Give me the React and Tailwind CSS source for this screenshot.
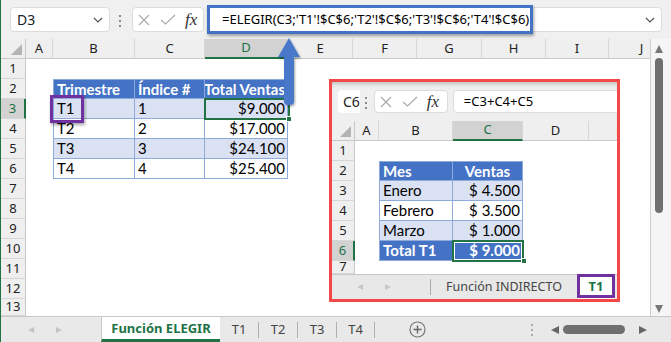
import React from "react";

const UI = "font-['Noto_Sans','DejaVu_Sans',sans-serif]";
const CELL = "font-['Lato','Liberation_Sans',sans-serif]";

// --- column definitions ---
const mainCols = [
  { l: "A", w: "w-[27px]" },
  { l: "B", w: "w-[82px]" },
  { l: "C", w: "w-[70px]" },
  { l: "D", w: "w-[83px]" },
  { l: "E", w: "w-[65px]" },
  { l: "F", w: "w-[64px]" },
  { l: "G", w: "w-[65px]" },
  { l: "H", w: "w-[64px]" },
  { l: "I", w: "w-[63px]" },
  { l: "J", w: "w-[66px]" },
];

const insetCols = [
  { l: "A", w: "w-[24px]" },
  { l: "B", w: "w-[74px]" },
  { l: "C", w: "w-[70px]" },
  { l: "D", w: "w-[66px]" },
  { l: "E", w: "w-[62px]" },
];

const mainTable = {
  2: { tone: "head", v: ["Trimestre", "Índice #", "Total Ventas"] },
  3: { tone: "band", v: ["T1", "1", "$9.000"] },
  4: { tone: "plain", v: ["T2", "2", "$17.000"] },
  5: { tone: "band", v: ["T3", "3", "$24.100"] },
  6: { tone: "plain", v: ["T4", "4", "$25.400"] },
};

const insetTable = {
  2: { tone: "head", v: ["Mes", "Ventas"] },
  3: { tone: "band", v: ["Enero", "$ 4.500"] },
  4: { tone: "plain", v: ["Febrero", "$ 3.500"] },
  5: { tone: "band", v: ["Marzo", "$ 1.000"] },
  6: { tone: "head", v: ["Total T1", "$ 9.000"] },
};

const tones = {
  head: "bg-[#4472c4] font-bold text-white",
  band: "bg-[#d9e1f2] text-black",
  plain: "bg-white text-black",
};

// --- small drawings ---
const Chevron = () => (
  <svg width="10" height="6" viewBox="0 0 10 6" className="shrink-0">
    <path d="M1 1l4 4 4-4" fill="none" stroke="#555" strokeWidth="1.2" />
  </svg>
);

const Dots = ({ className = "" }) => (
  <div className={`flex flex-col gap-[3px] pt-[8px] ${className}`}>
    <span className="h-[2px] w-[2px] bg-[#8a8a8a]" />
    <span className="h-[2px] w-[2px] bg-[#8a8a8a]" />
    <span className="h-[2px] w-[2px] bg-[#8a8a8a]" />
  </div>
);

const Tri = ({ dir, color = "#777", s = 8 }) => {
  const pts = {
    up: `0,${s} ${s / 2},0 ${s},${s}`,
    down: `0,0 ${s},0 ${s / 2},${s}`,
    left: `${s},0 ${s},${s} 0,${s / 2}`,
    right: `0,0 ${s},${s / 2} 0,${s}`,
  };
  return (
    <svg width={s} height={s} viewBox={`0 0 ${s} ${s}`} className="shrink-0">
      <polygon points={pts[dir]} fill={color} />
    </svg>
  );
};

const FxBox = ({ w }) => (
  <div className={`flex h-full ${w} items-center rounded-[4px] border border-[#dcdcdc] bg-white pl-[5px]`}>
    <svg width="12" height="12" viewBox="0 0 12 12" className="shrink-0">
      <path d="M1 1l10 10M11 1L1 11" stroke="#a8a8a8" strokeWidth="1.1" fill="none" />
    </svg>
    <svg width="16" height="11" viewBox="0 0 16 11" className="ml-[10px] shrink-0">
      <path d="M1 6l4.5 4L15 1" stroke="#a8a8a8" strokeWidth="1.1" fill="none" />
    </svg>
    <span className="ml-[9px] font-['Liberation_Serif',serif] text-[17px] italic leading-none text-[#333]">
      fx
    </span>
  </div>
);

const Corner = ({ w }) => (
  <div className={`relative ${w} shrink-0 border-r border-b border-[#c8c8c8] bg-[#efefef]`}>
    <svg width="11" height="11" viewBox="0 0 11 11" className="absolute bottom-[3px] right-[3px]">
      <polygon points="11,0 11,11 0,11" fill="#b4b4b4" />
    </svg>
  </div>
);

// --- main sheet ---
const RowHead = ({ n, active, w, h = "h-5" }) => (
  <div
    className={`flex ${w} ${h} shrink-0 items-center justify-center border-b border-[#d6d6d6] text-[13px] ${
      active
        ? "border-r-2 border-r-[#217346] bg-[#d2d2d2] text-[#217346]"
        : "border-r border-r-[#c8c8c8] bg-[#efefef] text-[#222]"
    }`}
  >
    {n}
  </div>
);

const ColHead = ({ c, active }) => (
  <div
    className={`flex ${c.w} h-full shrink-0 items-center justify-center border-r border-[#d6d6d6] text-[13px] ${
      active
        ? "border-b-2 border-b-[#217346] bg-[#d2d2d2] text-[#217346]"
        : "border-b border-b-[#c8c8c8] bg-[#efefef] text-[#222]"
    }`}
  >
    {c.l}
  </div>
);

const TableRow = ({ n, cols, table, first, last, rowW, activeRow, h = "h-5", center }) => {
  const t = table[n];
  return (
    <div className={`flex ${h} shrink-0`}>
      <RowHead n={n} active={n === activeRow} w={rowW} h={h} />
      {cols.map((c, i) => {
        if (!t || i < first || i > last) return <div key={c.l} className={`${c.w} shrink-0`} />;
        const k = i - first;
        const right = i === last;
        return (
          <div
            key={c.l}
            className={`flex ${c.w} shrink-0 items-center overflow-hidden whitespace-nowrap border-r border-b border-[#8eaadb] ${CELL} text-[15px] ${tones[t.tone]} ${
              i === first ? "border-l" : ""
            } ${n === 2 ? "border-t" : ""} ${
              right ? (n === 2 && center ? "justify-center" : "justify-end pr-[2px]") : "pl-[3px]"
            }`}
          >
            {t.v[k]}
          </div>
        );
      })}
    </div>
  );
};

const Sheet = () => (
  <div className="w-[650px] shrink-0 overflow-hidden border-r border-[#cfcfcf]">
    <div className="flex h-5">
      <Corner w="w-[25px]" />
      {mainCols.map((c) => (
        <ColHead key={c.l} c={c} active={c.l === "D"} />
      ))}
    </div>
    {[1, 2, 3, 4, 5, 6, 7, 8, 9, 10, 11, 12].map((n) => (
      <TableRow key={n} n={n} cols={mainCols} table={mainTable} first={1} last={3} rowW="w-[25px]" activeRow={3} />
    ))}
    <TableRow n={13} cols={mainCols} table={mainTable} first={1} last={3} rowW="w-[25px]" activeRow={3} h="h-[17px]" />
  </div>
);

const VScroll = () => (
  <div className="flex flex-1 flex-col items-center bg-[#f5f5f5] pr-[4px] pt-[6px] pb-[3px]">
    <Tri dir="up" />
    <div className="mt-[5px] h-[155px] w-[8px] rounded-full bg-[#6f6f6f]" />
    <div className="flex-1" />
    <Tri dir="down" />
  </div>
);

const MainTabs = () => (
  <div className="flex h-[26px] shrink-0 border-t border-[#c8c8c8] bg-[#e9e9e9] text-[13px] text-[#444]">
    <div className="flex w-[100px] shrink-0 items-center pl-[27px]">
      <Tri dir="left" color="#c4c4c4" s={6} />
      <span className="w-[22px]" />
      <Tri dir="right" color="#c4c4c4" s={6} />
    </div>
    <div className="flex w-[119px] shrink-0 items-center justify-center whitespace-nowrap border-l border-b-[3px] border-l-[#c8c8c8] border-b-[#217346] bg-white pt-[2px] font-bold text-[#217346]">
      Función ELEGIR
    </div>
    {["T1", "T2", "T3", "T4"].map((t, i) => (
      <div key={t} className={`flex ${i === 3 ? "w-[38px]" : "w-[39px]"} shrink-0 items-center`}>
        <span className="flex-1 text-center">{t}</span>
        <span className="h-[16px] w-px bg-[#b0b0b0]" />
      </div>
    ))}
    <div className="ml-[34px] flex items-center">
      <svg width="17" height="17" viewBox="0 0 17 17">
        <circle cx="8.5" cy="8.5" r="7.5" fill="none" stroke="#777" strokeWidth="1.2" />
        <path d="M8.5 4.5v8M4.5 8.5h8" stroke="#666" strokeWidth="1.4" />
      </svg>
    </div>
    <div className="ml-[105px] flex flex-col justify-center gap-[3px]">
      <span className="h-[2px] w-[2px] bg-[#aaa]" />
      <span className="h-[2px] w-[2px] bg-[#aaa]" />
      <span className="h-[2px] w-[2px] bg-[#aaa]" />
    </div>
    <div className="ml-[18px] flex items-center">
      <Tri dir="left" color="#666" s={8} />
      <div className="ml-[4px] h-[9px] w-[62px] rounded-full bg-[#6f6f6f]" />
      <span className="w-[14px]" />
      <Tri dir="right" color="#666" s={8} />
    </div>
  </div>
);

// --- inset window (the T1 sheet) ---
const Inset = () => (
  <div className="absolute left-[328px] top-[79px] flex h-[223px] w-[291px] flex-col overflow-hidden border-[3px] border-[#f24848] bg-white">
    <div className="flex h-[39px] shrink-0 items-start bg-[#efefef] pl-[6px] pt-[8px] shadow-[inset_0_4px_4px_-2px_rgba(0,0,0,0.2)]">
      <div className="flex h-[23px] w-[30px] items-center rounded-l-[4px] bg-white pl-[5px] text-[14px] text-[#222]">
        C6
      </div>
      <Dots className="ml-[5px] !pt-[7px]" />
      <div className="ml-[7px] h-[23px]">
        <FxBox w="w-[74px]" />
      </div>
      <div className="ml-[5px] flex h-[23px] w-[200px] shrink-0 items-center whitespace-nowrap rounded-[4px] border border-[#dcdcdc] bg-white pl-[10px] text-[13px] text-black">
        =C3+C4+C5
      </div>
    </div>
    <div className="flex h-5 shrink-0">
      <Corner w="w-[23px]" />
      {insetCols.map((c) => (
        <ColHead key={c.l} c={c} active={c.l === "C"} />
      ))}
    </div>
    {[1, 2, 3, 4, 5, 6].map((n) => (
      <TableRow key={n} n={n} cols={insetCols} table={insetTable} first={1} last={2} rowW="w-[23px]" activeRow={6} center />
    ))}
    <TableRow n={7} cols={insetCols} table={insetTable} first={1} last={2} rowW="w-[23px]" activeRow={6} h="h-[13px]" />
    <div className="flex h-[25px] shrink-0 border-t border-[#c8c8c8] bg-[#e8e8e8] text-[12.5px] text-[#444]">
      <div className="flex w-[98px] shrink-0 items-center pl-[25px]">
        <Tri dir="left" color="#c8c8c8" s={6} />
        <span className="w-[22px]" />
        <Tri dir="right" color="#c8c8c8" s={6} />
      </div>
      <div className="flex items-center">
        <span className="h-[16px] w-px bg-[#a8a8a8]" />
      </div>
      <div className="flex shrink-0 items-center whitespace-nowrap pl-[15px]">Función INDIRECTO</div>
      <div className="flex-1" />
      <div className="mr-[2px] flex w-[38px] shrink-0 items-center justify-center bg-white text-[13px] font-bold text-[#217346]">
        T1
      </div>
    </div>
    {/* selected C6 */}
    <div className="absolute left-[120px] top-[158px] h-[22px] w-[72px] border-2 border-[#217346]">
      <div className="h-full w-full border border-white" />
    </div>
    <div className="absolute left-[189px] top-[176px] h-[6px] w-[6px] border border-white bg-[#217346]" />
    {/* purple mark on tab */}
    <div className="absolute left-[245px] top-[192px] h-[24px] w-[38px] border-[3px] border-[#7030a0]" />
  </div>
);

export default function App() {
  return (
    <div className={`relative flex h-[342px] w-[671px] flex-col overflow-hidden border-l border-[#217346] bg-white ${UI}`}>
      {/* formula bar */}
      <div className="flex h-[39px] shrink-0 items-start bg-[#f0f0f0] pl-[9px] pt-[7px]">
        <div className="flex h-[25px] w-[100px] items-center justify-between rounded-[4px] border border-[#dcdcdc] bg-white px-[6px] text-[14px] text-[#222]">
          D3
          <Chevron />
        </div>
        <Dots className="ml-[9px] mr-[11px]" />
        <div className="h-[25px]">
          <FxBox w="w-[72px]" />
        </div>
        <div className="ml-[3px] flex h-[25px] w-[455px] items-center justify-between whitespace-nowrap rounded-[4px] border border-[#dcdcdc] bg-white pl-[14px] pr-[6px] text-[13px] text-black">
          =ELEGIR(C3;'T1'!$C$6;'T2'!$C$6;'T3'!$C$6;'T4'!$C$6)
          <Chevron />
        </div>
      </div>

      <div className="flex h-[277px] shrink-0">
        <Sheet />
        <VScroll />
      </div>

      <MainTabs />

      {/* selected D3 */}
      <div className="absolute left-[203px] top-[98px] h-[22px] w-[86px] border-2 border-[#217346]" />
      <div className="absolute left-[285px] top-[116px] h-[6px] w-[6px] border border-white bg-[#217346]" />

      {/* purple mark on T1 */}
      <div className="absolute left-[49px] top-[95px] h-[28px] w-[34px] border-[3px] border-[#7030a0] shadow-[1px_2px_3px_rgba(0,0,0,0.35)]" />

      {/* blue highlight on formula */}
      <div className="absolute left-[206px] top-[5px] h-[29px] w-[326px] border-[3px] border-[#4472c4] shadow-[1px_2px_3px_rgba(0,0,0,0.35)]" />

      {/* arrow */}
      <svg className="absolute left-[276px] top-[35px]" width="26" height="74" viewBox="0 0 26 74">
        <defs>
          <filter id="arrowShadow" x="-30%" y="-10%" width="160%" height="130%">
            <feDropShadow dx="1" dy="1.5" stdDeviation="1" floodOpacity="0.35" />
          </filter>
        </defs>
        <g filter="url(#arrowShadow)" fill="#4a78cb">
          <polygon points="12,3 23,22 1,22" />
          <rect x="7" y="20" width="10" height="50" rx="4" />
        </g>
      </svg>

      <Inset />
    </div>
  );
}
